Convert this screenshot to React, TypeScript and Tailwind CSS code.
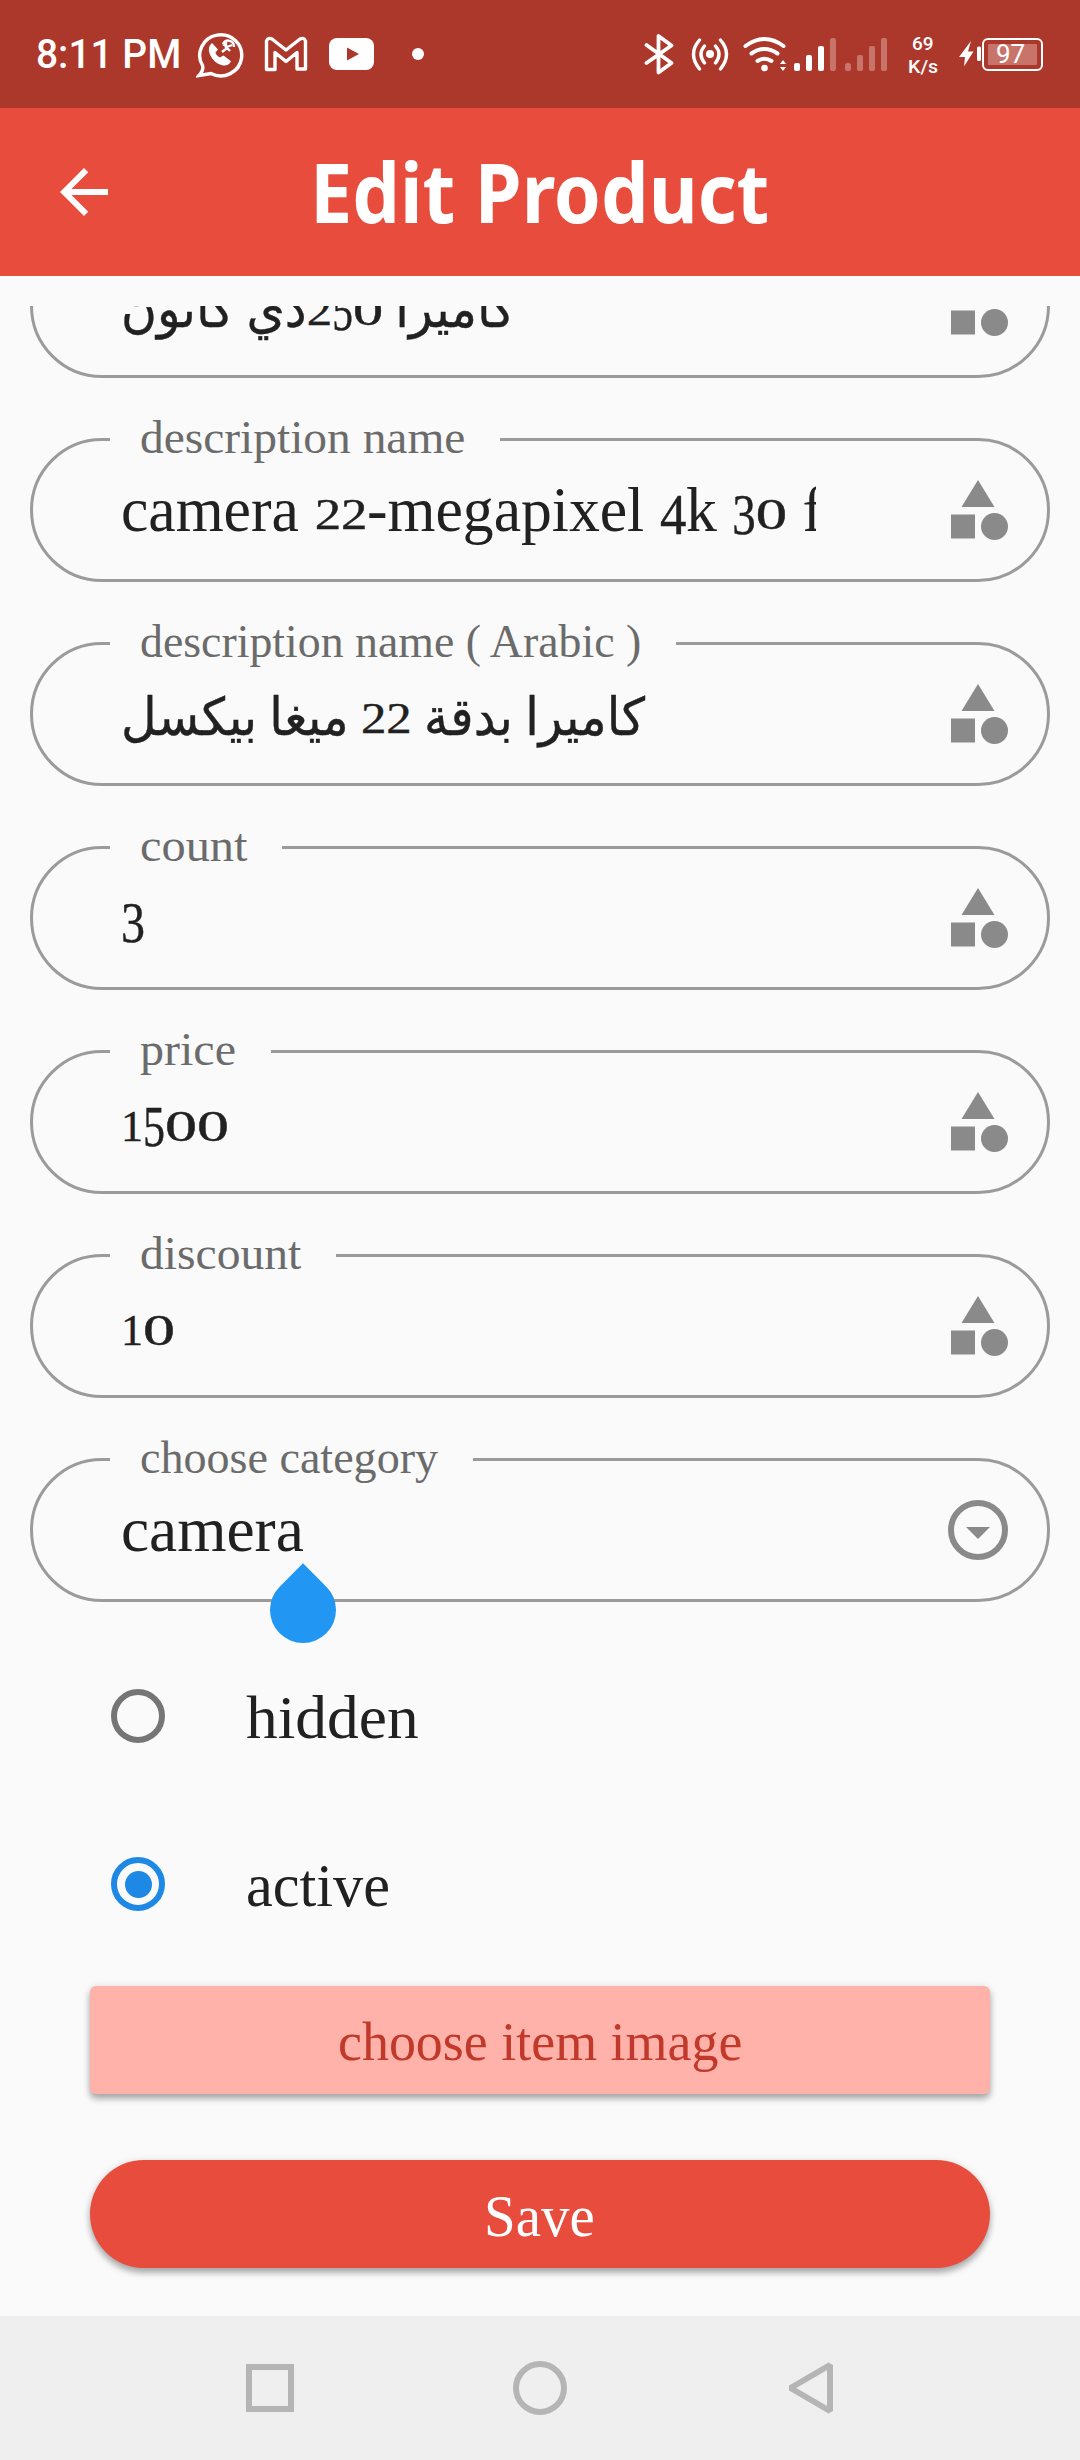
import { useLayoutEffect, useRef, type ReactNode } from "react";

/** Inline text squeezed or stretched horizontally to a given advance width. */
function Fit({ w, children, className = "" }: { w: number; children: ReactNode; className?: string }) {
  const inner = useRef<HTMLSpanElement>(null);
  useLayoutEffect(() => {
    const el = inner.current;
    if (el) el.style.transform = `scaleX(${w / el.offsetWidth})`;
  }, [w]);
  return (
    <span className={`inline-block shrink-0 whitespace-nowrap ${className}`} style={{ width: w }}>
      <span ref={inner} className="inline-block origin-left whitespace-pre">
        {children}
      </span>
    </span>
  );
}

const digitWidth: Record<string, number> = { "0": 32, "1": 22, "2": 27, "3": 24, "4": 27, "5": 22 };

/** Old-style figures: 0-2 sit at x-height, the rest hang below the baseline. */
function OldStyle({ text }: { text: string }) {
  return (
    <bdi dir="ltr">
      {text.split(/(\d)/).map((part, i) => {
        if (!(part in digitWidth)) return part;
        const small = part < "3";
        return (
          <Fit
            key={i}
            w={digitWidth[part]}
            className={
              small
                ? "relative -top-[2px] text-[44px] leading-none [-webkit-text-stroke:0.4px_currentColor]"
                : "relative top-[3px] text-[56px] leading-none [-webkit-text-stroke:0.4px_currentColor]"
            }
          >
            {part}
          </Fit>
        );
      })}
    </bdi>
  );
}

function Arabic({ w, children }: { w: number; children: ReactNode }) {
  return (
    <Fit w={w} className="text-[52px] leading-[80px] [-webkit-text-stroke:0.4px_currentColor]">
      <bdi dir="rtl">{children}</bdi>
    </Fit>
  );
}

function CategoryIcon() {
  return (
    <svg viewBox="0 0 24 24" className="size-[72px] shrink-0" fill="#8a8a8a">
      <path d="M12 2 6.5 11h11z" />
      <circle cx="17.5" cy="17.5" r="4.5" />
      <path d="M3 13.5h8v8H3z" />
    </svg>
  );
}

function DropdownIcon() {
  return (
    <svg viewBox="0 0 24 24" className="size-[72px] shrink-0" fill="#8a8a8a">
      <circle cx="12" cy="12" r="9" fill="none" stroke="#8a8a8a" strokeWidth="2" />
      <path d="m8 11 4 4 4-4z" />
    </svg>
  );
}

function Field({ label, labelW, children, icon, handle }: { label?: string; labelW?: number; children: ReactNode; icon?: ReactNode; handle?: boolean }) {
  return (
    <div className="relative mb-[60px] flex h-[144px] items-center rounded-[72px] border-[3px] border-[#9b9b9b] pr-[33px] pl-[88px]">
      {label && (
        <span className="absolute -top-[34px] left-[77px] bg-[#fafafa] pr-[35px] pl-[30px] text-[47px] leading-[60px] text-[#6b6b6b]">
          <Fit w={labelW ?? 0}>{label}</Fit>
        </span>
      )}
      <div className="h-[134px] w-[695px] overflow-hidden text-[63px] leading-[134px] whitespace-nowrap">{children}</div>
      <div className="ml-auto">{icon ?? <CategoryIcon />}</div>
      {handle && <div className="absolute top-[116px] left-[237px] size-[66px] rotate-45 rounded-full rounded-tl-none bg-[#2196f3]" />}
    </div>
  );
}

function Radio({ label, w, on }: { label: string; w: number; on?: boolean }) {
  return (
    <div className="flex h-[168px] items-center pl-[81px]">
      <div className={`flex size-[54px] items-center justify-center rounded-full border-[6px] ${on ? "border-[#1e88e5]" : "border-[#757575]"}`}>
        {on && <div className="size-[27px] rounded-full bg-[#1e88e5]" />}
      </div>
      <Fit w={w} className="mt-[2px] ml-[81px] text-[62px] leading-[166px]">{label}</Fit>
    </div>
  );
}

function StatusBar() {
  return (
    <header className="flex h-[108px] items-center bg-[#ac382b] pl-[36px] font-['Roboto'] text-white">
      <Fit w={145} className="mt-[2px] text-[40px] leading-[106px] font-medium">8:11 PM</Fit>
      <svg viewBox="196 30 48 48" className="ml-[15px] size-[48px]" fill="none" stroke="#fff">
        <path d="M202.500 65.500A21 20.500 0 1 1 211 73.500L199 75.500Q204 70 202.500 65.500Z" strokeWidth="3.400" />
        <path d="M212 44q-4 4-1.500 10 4 9 12 10.500 5 1 7.500-3l-6.500-5-4 2q-4-2-5-6l2.500-3z" fill="#fff" strokeWidth="1.500" />
        <path d="M223 44q2-5 7-3 4 1 4 6M223 44l4 3 5-2M222 52l5-4 3 3M226 42v7" strokeWidth="2.400" />
      </svg>
      <svg viewBox="264 36 44 36" className="ml-[20px] h-[36px] w-[44px]" fill="none" stroke="#fff" strokeWidth="3.400" strokeLinejoin="round">
        <path d="M266.500 41q1.500-4 5.500-2L286 50l14-11q4-2 5.500 2v28H297V52.500L286 61.500 275 52.500V69.500H266.500Z" />
      </svg>
      <svg viewBox="328 37 46 34" className="ml-[20px] h-[34px] w-[46px]">
        <rect x="329" y="38" width="45" height="32" rx="8" fill="#fff" />
        <path d="m347 47.500 12 6.500-12 6.500z" fill="#ac382b" />
      </svg>
      <div className="ml-[38px] size-[12px] rounded-full bg-white" />

      <svg viewBox="643 33 32 42" className="ml-[219px] h-[42px] w-[32px]" fill="none" stroke="#fff" strokeWidth="3.800" strokeLinejoin="round" strokeLinecap="round">
        <path d="m646.500 45 25 18-13 9.500V36l13 9.500-25 17.500" />
      </svg>
      <svg viewBox="689 36 42 36" className="ml-[14px] h-[36px] w-[42px]" fill="none" stroke="#fff" strokeWidth="3.400" strokeLinecap="round">
        <circle cx="710" cy="54" r="4" fill="#fff" stroke="none" />
        <path d="M704.500 46q-7 8 0 17M699.500 40q-12 14 0 29M715.500 46q7 8 0 17M720.500 40q12 14 0 29" />
      </svg>
      <svg viewBox="742 34 46 39" className="ml-[11px] h-[39px] w-[46px]" fill="none" stroke="#fff" strokeWidth="4" strokeLinecap="round">
        <path d="M745.500 45q19-14 38 0M751.500 52.500q13-9 26 0M757.500 60q7-4.500 14 0" />
        <circle cx="764.500" cy="67" r="3.300" fill="#fff" stroke="none" />
        <path d="m780 63 3-4 3 4zM780 66l3 4 3-4z" fill="#fff" stroke="none" />
      </svg>
      <div className="ml-[6px] flex items-end gap-[6px]">
        <i className="h-[8px] w-[6px] rounded-[2px] bg-white" />
        <i className="h-[16px] w-[6px] rounded-[2px] bg-white" />
        <i className="h-[25px] w-[6px] rounded-[2px] bg-white" />
        <i className="h-[33px] w-[6px] rounded-[2px] bg-[#c8746b]" />
      </div>
      <div className="ml-[9px] flex items-end gap-[6px]">
        <i className="h-[8px] w-[6px] rounded-[2px] bg-[#c8746b]" />
        <i className="h-[16px] w-[6px] rounded-[2px] bg-[#c8746b]" />
        <i className="h-[25px] w-[6px] rounded-[2px] bg-[#c8746b]" />
        <i className="h-[33px] w-[6px] rounded-[2px] bg-[#c8746b]" />
      </div>
      <div className="mt-[2px] ml-[21px] flex w-[30px] flex-col items-center text-[19px] leading-[23px] font-medium">
        <Fit w={22}>69</Fit>
        <Fit w={30}>K/s</Fit>
      </div>
      <svg viewBox="958 41 24 28" className="ml-[20px] h-[28px] w-[24px]" fill="#fff">
        <path d="m971 42-12 16h6l-1 9.500 9.500-15H968z" />
        <rect x="977" y="47.500" width="4" height="14.500" rx="1.500" />
      </svg>
      <div className="h-[33px] w-[61px] rounded-[6px] border-[2px] border-white p-[4px]">
        <div className="flex h-full items-center justify-center rounded-[1px] bg-[#c8746b]">
          <Fit w={29} className="-ml-[4px] text-[26px] leading-[26px]">97</Fit>
        </div>
      </div>
    </header>
  );
}

export default function App() {
  return (
    <div className="flex h-[2460px] w-[1080px] flex-col overflow-hidden bg-[#fafafa] font-['Liberation_Serif','DejaVu_Sans',serif] text-[#212121]">
      <StatusBar />

      <div className="flex h-[168px] items-center bg-[#e84c3d] pl-[48px] text-white">
        <svg viewBox="0 0 24 24" className="size-[72px]" fill="currentColor">
          <path d="M20 11H7.830l5.590-5.590L12 4l-8 8 8 8 1.410-1.410L7.830 13H20z" />
        </svg>
        <h1 className="mb-[2px] ml-[190px] font-['Noto_Sans'] text-[82px] leading-[166px] font-bold">
          <Fit w={459}>Edit Product</Fit>
        </h1>
      </div>

      <main className="mt-[30px] h-[2010px] overflow-hidden px-[30px]">
        <div className="-mt-[72px]">
          <Field>
            <Arabic w={394}>كاميرا <OldStyle text="250" />دي كانون</Arabic>
          </Field>
          <Field label="description name" labelW={325}>
            <Fit w={757}><OldStyle text="camera 22-megapixel 4k 30 fps" /></Fit>
          </Field>
          <Field label="description name ( Arabic )" labelW={501}>
            <Arabic w={524}>كاميرا بدقة <OldStyle text="22" /> ميغا بيكسل</Arabic>
          </Field>
          <Field label="count" labelW={107}>
            <OldStyle text="3" />
          </Field>
          <Field label="price" labelW={96}>
            <OldStyle text="1500" />
          </Field>
          <Field label="discount" labelW={161}>
            <OldStyle text="10" />
          </Field>
          <Field label="choose category" labelW={298} icon={<DropdownIcon />} handle>
            <Fit w={183}>camera</Fit>
          </Field>
        </div>

        <div className="-mt-[30px] pb-[18px]">
          <Radio label="hidden" w={173} />
          <Radio label="active" w={144} on />
        </div>

        <div className="flex flex-col gap-[66px] px-[60px]">
          <button className="h-[108px] rounded-[6px] bg-[#ffb2aa] pt-[3px] text-[55px] leading-[104px] text-[#c0392b] shadow-[0_5px_6px_rgba(0,0,0,0.28),0_1px_8px_rgba(0,0,0,0.12)]">
            <Fit w={404}>choose item image</Fit>
          </button>
          <button className="h-[108px] rounded-full bg-[#e84c3d] pt-[4px] pr-[2px] text-[59px] leading-[102px] text-white shadow-[0_5px_6px_rgba(0,0,0,0.28),0_1px_8px_rgba(0,0,0,0.12)]">
            <Fit w={111}>Save</Fit>
          </button>
        </div>
      </main>

      <nav className="flex h-[144px] items-center bg-[#efefef] pl-[246px]">
        <div className="size-[48px] border-[6px] border-[#b5b5b5]" />
        <div className="ml-[219px] size-[54px] rounded-full border-[6px] border-[#b5b5b5]" />
        <svg viewBox="787 2361 48 54" className="ml-[220px] h-[54px] w-[48px]" fill="none" stroke="#b5b5b5" strokeWidth="6" strokeLinejoin="bevel">
          <path d="M830 2365v46L790.500 2388Z" />
        </svg>
      </nav>
    </div>
  );
}
